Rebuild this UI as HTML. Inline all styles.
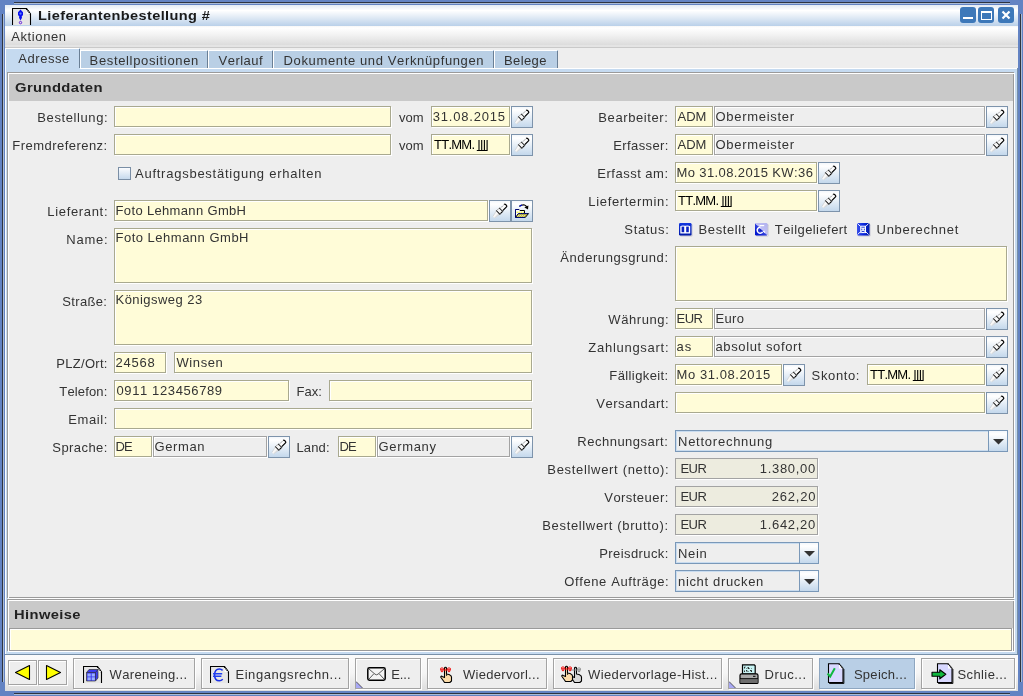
<!DOCTYPE html><html><head><meta charset="utf-8"><style>
html,body{margin:0;padding:0;}
body{width:1023px;height:696px;position:relative;overflow:hidden;background:#eeeeee;}
div,span,svg{position:absolute;}
.t{font-family:"Liberation Sans",sans-serif;font-size:13px;line-height:15px;white-space:nowrap;font-kerning:none;}
.btn{box-sizing:border-box;border:1px solid #7d93ab;background:linear-gradient(#f3f7fb 0%,#ffffff 15%,#c4d8ec 100%);}
.btn svg{left:-1px;top:-1px;}
.combo{box-sizing:border-box;border:1px solid #7a98b8;background:#eeeeee;box-shadow:inset 1px 1px 0 #c9dcef,inset -1px -1px 0 #c9dcef;}
.cbtn{box-sizing:border-box;border:1px solid #7a98b8;background:linear-gradient(#f3f7fb 0%,#ffffff 15%,#c4d8ec 100%);}
</style></head><body><div style="left:0;top:0;width:1023px;height:696px;background:#6383c3"></div>
<div style="left:2px;top:14px;width:1px;height:668px;background:#2e3440"></div>
<div style="left:3px;top:14px;width:1px;height:668px;background:#a9bbd6"></div>
<div style="left:14px;top:2px;width:996px;height:1px;background:#2e3440"></div>
<div style="left:14px;top:3px;width:996px;height:1px;background:#a9bbd6"></div>
<div style="left:1020px;top:14px;width:1px;height:668px;background:#2e3440"></div>
<div style="left:1021px;top:14px;width:1px;height:668px;background:#a9bbd6"></div>
<div style="left:14px;top:693px;width:996px;height:1px;background:#2e3440"></div>
<div style="left:14px;top:694px;width:996px;height:1px;background:#a9bbd6"></div>
<div style="left:5px;top:5px;width:1013px;height:21px;background:linear-gradient(#e4ebf4 0px,#ffffff 5.5px,#bcd2ea 20.5px)"></div>
<div style="left:5px;top:26px;width:1013px;height:22px;background:linear-gradient(#f6f6f6 0px,#ffffff 2px,#f4f4f4 8px,#dcdcdc 19px,#e4e4e4 19px,#e4e4e4 21px,#c9c9c9 21px)"></div>
<div style="left:5px;top:48px;width:1013px;height:643px;background:#eeeeee"></div>
<svg style="position:absolute;left:12px;top:8px" width="20" height="18" viewBox="0 0 20 18"><path d="M1,17 L1,1 L14.5,1 L18.5,6 L18.5,17 Z" fill="#e6e6e6"/><path d="M0.5,17 L0.5,0.5 L14.5,0.5 L18.5,6 L18.5,17" fill="none" stroke="#000" stroke-width="1.1"/><path d="M14.5,1 L14.5,6 L18.5,6" fill="#fff"/><path d="M14.3,0.8 L18.5,6.2" stroke="#000" stroke-width="1.3" stroke-dasharray="1.2,0.8"/><path d="M8.5,1.6 L11,4.3 L11,7 L9.7,8.4 L10,9.8 L8.5,12.4 L7,9.8 L7.3,8.4 L6,7 L6,4.3 Z" fill="#0a10f0"/><circle cx="8.5" cy="5.6" r="1.1" fill="#6080ff"/><circle cx="8.5" cy="14.6" r="1.2" fill="none" stroke="#5a10d8" stroke-width="0.9"/></svg>

<div style="left:960px;top:7px;width:16px;height:16px;background:#3d78b9;border-radius:3px"></div>
<div style="left:978px;top:7px;width:16px;height:16px;background:#3d78b9;border-radius:3px"></div>
<div style="left:998px;top:7px;width:16px;height:16px;background:#3d78b9;border-radius:3px"></div>
<div style="left:963px;top:17px;width:10px;height:2px;background:#fff"></div>
<div style="left:981px;top:11px;width:11px;height:9px;box-sizing:border-box;border:1.5px solid #fff;border-top-width:2px"></div>
<svg style="position:absolute;left:1001px;top:10px" width="10" height="10"><path d="M1.5,1.5 L8.5,8.5 M8.5,1.5 L1.5,8.5" stroke="#fff" stroke-width="2.2"/></svg>

<div style="left:5px;top:68px;width:1013px;height:587px;background:#c5daf0"></div>
<div style="left:5px;top:68px;width:1012px;height:1px;background:#fff"></div>
<div style="left:5px;top:68px;width:1px;height:587px;background:#fff"></div>
<div style="left:1017px;top:68px;width:1px;height:587px;background:#7890a8"></div>
<div style="left:5px;top:654px;width:1013px;height:1px;background:#7890a8"></div>
<div style="left:5px;top:48px;width:75px;height:21px;background:#c5daf0"></div>
<div style="left:5px;top:48px;width:74px;height:1px;background:#fff"></div>
<div style="left:5px;top:48px;width:1px;height:21px;background:#fff"></div>
<div style="left:79px;top:49px;width:1px;height:19px;background:#6a7f95"></div>
<div style="left:80px;top:50px;width:128px;height:18px;background:#b9cfe5"></div>
<div style="left:80px;top:50px;width:127px;height:1px;background:#fff"></div>
<div style="left:80px;top:50px;width:1px;height:18px;background:#fff"></div>
<div style="left:207px;top:51px;width:1px;height:17px;background:#6a7f95"></div>
<div style="left:208px;top:50px;width:65px;height:18px;background:#b9cfe5"></div>
<div style="left:208px;top:50px;width:64px;height:1px;background:#fff"></div>
<div style="left:208px;top:50px;width:1px;height:18px;background:#fff"></div>
<div style="left:272px;top:51px;width:1px;height:17px;background:#6a7f95"></div>
<div style="left:273px;top:50px;width:221px;height:18px;background:#b9cfe5"></div>
<div style="left:273px;top:50px;width:220px;height:1px;background:#fff"></div>
<div style="left:273px;top:50px;width:1px;height:18px;background:#fff"></div>
<div style="left:493px;top:51px;width:1px;height:17px;background:#6a7f95"></div>
<div style="left:494px;top:50px;width:64px;height:18px;background:#b9cfe5"></div>
<div style="left:494px;top:50px;width:63px;height:1px;background:#fff"></div>
<div style="left:494px;top:50px;width:1px;height:18px;background:#fff"></div>
<div style="left:557px;top:51px;width:1px;height:17px;background:#6a7f95"></div>
<div style="left:80px;top:68px;width:937px;height:1px;background:#fff"></div>





<div style="left:7px;top:72px;width:1007px;height:526px;background:#eeeeee;box-sizing:border-box;border:1px solid #9a9a9a"></div>
<div style="left:8px;top:73px;width:1007px;height:526px;box-sizing:border-box;border:1px solid #fff;background:transparent"></div>
<div style="left:9px;top:74px;width:1004px;height:27px;background:#c9c9c9"></div>

<div style="left:7px;top:599px;width:1007px;height:52px;background:#eeeeee;box-sizing:border-box;border:1px solid #9a9a9a"></div>
<div style="left:8px;top:600px;width:1007px;height:52px;box-sizing:border-box;border:1px solid #fff;background:transparent"></div>
<div style="left:9px;top:601px;width:1004px;height:27px;background:#c9c9c9"></div>

<div style="left:9px;top:628px;width:1003px;height:23px;background:#fffcd8;box-sizing:border-box;border:1px solid #9a9a9a;box-shadow:inset 1px 1px 0 #fff"></div>
<div style="left:1012px;top:629px;width:1px;height:22px;background:#fff"></div>

<div style="left:115px;top:127px;width:277px;height:1px;background:#fff"></div>
<div style="left:391px;top:107px;width:1px;height:21px;background:#fff"></div>
<div style="left:114px;top:106px;width:277px;height:21px;background:#fffcd8;box-sizing:border-box;border:1px solid #a9a98f;box-shadow:inset 1px 1px 0 #fff;"></div>

<div style="left:432px;top:127px;width:79px;height:1px;background:#fff"></div>
<div style="left:510px;top:107px;width:1px;height:21px;background:#fff"></div>
<div style="left:431px;top:106px;width:79px;height:21px;background:#fffcd8;box-sizing:border-box;border:1px solid #a9a98f;box-shadow:inset 1px 1px 0 #fff;"></div>

<div class="btn" style="left:511px;top:106px;width:22px;height:22px"><svg width="22" height="22" viewBox="0 0 22 22">
<g transform="translate(10.8,10.9) rotate(-45)">
<defs><linearGradient id="ptg" x1="0" y1="0" x2="0" y2="1"><stop offset="0" stop-color="#ffffff"/><stop offset="0.55" stop-color="#f6f6f6"/><stop offset="1" stop-color="#c4c4c4"/></linearGradient></defs>
<path d="M-8.8,-0.9 L-2.6,-2.4 L-2.6,2.5 L-8.8,1.5 Z" fill="url(#ptg)"/>
<path d="M-8.8,-0.9 L-2.6,-2.4" stroke="#c8c8c8" stroke-width="0.6"/>
<rect x="-2.8" y="-2.9" width="1.2" height="5.8" fill="#2a2a2a"/>
<rect x="-1.6" y="-2.8" width="2.9" height="5.6" fill="#f8f8f8"/>
<path d="M-1.6,2.4 L1.3,2.4" stroke="#000" stroke-width="1.1"/>
<path d="M-1.6,-2.4 L1.3,-2.4" stroke="#8a8a8a" stroke-width="0.8"/>
<rect x="1.3" y="-2.6" width="1" height="5.4" fill="#1a1a1a"/>
<rect x="2.3" y="-1.5" width="6" height="3.3" fill="#fcfcfc"/>
<path d="M2.3,1.85 L7.6,1.85 Q8.6,1.85 8.6,0.85 L8.6,-0.5 Q8.6,-1.5 7.6,-1.5" stroke="#000" stroke-width="1.2" fill="none"/>
<path d="M2.3,-1.5 L7.4,-1.5" stroke="#666" stroke-width="0.8" stroke-dasharray="0.9,0.8"/>
</g></svg></div>

<div style="left:115px;top:155px;width:277px;height:1px;background:#fff"></div>
<div style="left:391px;top:135px;width:1px;height:21px;background:#fff"></div>
<div style="left:114px;top:134px;width:277px;height:21px;background:#fffcd8;box-sizing:border-box;border:1px solid #a9a98f;box-shadow:inset 1px 1px 0 #fff;"></div>

<div style="left:432px;top:155px;width:79px;height:1px;background:#fff"></div>
<div style="left:510px;top:135px;width:1px;height:21px;background:#fff"></div>
<div style="left:431px;top:134px;width:79px;height:21px;background:#fffcd8;box-sizing:border-box;border:1px solid #a9a98f;box-shadow:inset 1px 1px 0 #fff;"></div>

<svg style="position:absolute;left:0;top:0" width="1023" height="696"><path d="M479.0,140 L479.0,150.5 L476.8,150.5 M481.7,140 L481.7,150.5 L479.5,150.5 M484.4,140 L484.4,150.5 L482.2,150.5 M487.1,140 L487.1,150.5 L484.9,150.5 " fill="none" stroke="#000" stroke-width="1.1"/></svg>
<div class="btn" style="left:511px;top:134px;width:22px;height:22px"><svg width="22" height="22" viewBox="0 0 22 22">
<g transform="translate(10.8,10.9) rotate(-45)">
<defs><linearGradient id="ptg" x1="0" y1="0" x2="0" y2="1"><stop offset="0" stop-color="#ffffff"/><stop offset="0.55" stop-color="#f6f6f6"/><stop offset="1" stop-color="#c4c4c4"/></linearGradient></defs>
<path d="M-8.8,-0.9 L-2.6,-2.4 L-2.6,2.5 L-8.8,1.5 Z" fill="url(#ptg)"/>
<path d="M-8.8,-0.9 L-2.6,-2.4" stroke="#c8c8c8" stroke-width="0.6"/>
<rect x="-2.8" y="-2.9" width="1.2" height="5.8" fill="#2a2a2a"/>
<rect x="-1.6" y="-2.8" width="2.9" height="5.6" fill="#f8f8f8"/>
<path d="M-1.6,2.4 L1.3,2.4" stroke="#000" stroke-width="1.1"/>
<path d="M-1.6,-2.4 L1.3,-2.4" stroke="#8a8a8a" stroke-width="0.8"/>
<rect x="1.3" y="-2.6" width="1" height="5.4" fill="#1a1a1a"/>
<rect x="2.3" y="-1.5" width="6" height="3.3" fill="#fcfcfc"/>
<path d="M2.3,1.85 L7.6,1.85 Q8.6,1.85 8.6,0.85 L8.6,-0.5 Q8.6,-1.5 7.6,-1.5" stroke="#000" stroke-width="1.2" fill="none"/>
<path d="M2.3,-1.5 L7.4,-1.5" stroke="#666" stroke-width="0.8" stroke-dasharray="0.9,0.8"/>
</g></svg></div>
<div style="left:118px;top:167px;width:13px;height:13px;box-sizing:border-box;border:1px solid #7a8ea5;background:linear-gradient(#fbfcfe,#c6d9ed)"></div>


<div style="left:115px;top:221px;width:374px;height:1px;background:#fff"></div>
<div style="left:488px;top:201px;width:1px;height:21px;background:#fff"></div>
<div style="left:114px;top:200px;width:374px;height:21px;background:#fffcd8;box-sizing:border-box;border:1px solid #a9a98f;box-shadow:inset 1px 1px 0 #fff;"></div>

<div class="btn" style="left:489px;top:200px;width:22px;height:22px"><svg width="22" height="22" viewBox="0 0 22 22">
<g transform="translate(10.8,10.9) rotate(-45)">
<defs><linearGradient id="ptg" x1="0" y1="0" x2="0" y2="1"><stop offset="0" stop-color="#ffffff"/><stop offset="0.55" stop-color="#f6f6f6"/><stop offset="1" stop-color="#c4c4c4"/></linearGradient></defs>
<path d="M-8.8,-0.9 L-2.6,-2.4 L-2.6,2.5 L-8.8,1.5 Z" fill="url(#ptg)"/>
<path d="M-8.8,-0.9 L-2.6,-2.4" stroke="#c8c8c8" stroke-width="0.6"/>
<rect x="-2.8" y="-2.9" width="1.2" height="5.8" fill="#2a2a2a"/>
<rect x="-1.6" y="-2.8" width="2.9" height="5.6" fill="#f8f8f8"/>
<path d="M-1.6,2.4 L1.3,2.4" stroke="#000" stroke-width="1.1"/>
<path d="M-1.6,-2.4 L1.3,-2.4" stroke="#8a8a8a" stroke-width="0.8"/>
<rect x="1.3" y="-2.6" width="1" height="5.4" fill="#1a1a1a"/>
<rect x="2.3" y="-1.5" width="6" height="3.3" fill="#fcfcfc"/>
<path d="M2.3,1.85 L7.6,1.85 Q8.6,1.85 8.6,0.85 L8.6,-0.5 Q8.6,-1.5 7.6,-1.5" stroke="#000" stroke-width="1.2" fill="none"/>
<path d="M2.3,-1.5 L7.4,-1.5" stroke="#666" stroke-width="0.8" stroke-dasharray="0.9,0.8"/>
</g></svg></div>
<div class="btn" style="left:511px;top:200px;width:22px;height:22px"><svg width="22" height="22" viewBox="0 0 22 22">
<path d="M4.5,17.5 L4.5,9.5 L8,9.5 L9,10.5 L13.5,10.5 L13.5,14" fill="#fdfdfd" stroke="#000" stroke-width="1"/>
<path d="M4.5,17.5 L4.5,9.5 L8,9.5" fill="none" stroke="#0010e0" stroke-width="1" stroke-dasharray="1,1"/>
<rect x="5.6" y="11.6" width="1.2" height="1.2" fill="#f0f000"/><rect x="7.6" y="11.6" width="1.2" height="1.2" fill="#f0f000"/><rect x="9.6" y="11.6" width="1.2" height="1.2" fill="#f0f000"/><rect x="11.6" y="11.6" width="1.2" height="1.2" fill="#f0f000"/>
<path d="M4.5,17.5 L7.3,13.6 L17.5,13.6 L14.2,17.5 Z" fill="#bdb640" stroke="#000" stroke-width="1"/>
<path d="M7.3,13.6 L17.5,13.6 M4.5,17.5 L14.2,17.5" stroke="#0018e8" stroke-width="1" stroke-dasharray="1,1"/>
<path d="M6.5,16.5 L8,14.8 M8.5,16.5 L10,14.8 M10.5,16.5 L12,14.8 M12.5,16.5 L14,14.8" stroke="#f4f4c0" stroke-width="0.8"/>
<path d="M8.4,6.4 Q10.5,4.6 13.5,5 Q15.2,5.4 15.8,7.6" fill="none" stroke="#000" stroke-width="1.2"/>
<path d="M8.4,6.4 Q9.5,5.4 11,5.1" fill="none" stroke="#0010c0" stroke-width="1.2"/>
<path d="M13.4,7.4 L17.4,5.6 L17,9.4 Z" fill="#000"/>
</svg></div>

<div style="left:115px;top:283px;width:418px;height:1px;background:#fff"></div>
<div style="left:532px;top:229px;width:1px;height:55px;background:#fff"></div>
<div style="left:114px;top:228px;width:418px;height:55px;background:#fffcd8;box-sizing:border-box;border:1px solid #a9a98f;box-shadow:inset 1px 1px 0 #fff;"></div>


<div style="left:115px;top:345px;width:418px;height:1px;background:#fff"></div>
<div style="left:532px;top:291px;width:1px;height:55px;background:#fff"></div>
<div style="left:114px;top:290px;width:418px;height:55px;background:#fffcd8;box-sizing:border-box;border:1px solid #a9a98f;box-shadow:inset 1px 1px 0 #fff;"></div>


<div style="left:115px;top:373px;width:52px;height:1px;background:#fff"></div>
<div style="left:166px;top:353px;width:1px;height:21px;background:#fff"></div>
<div style="left:114px;top:352px;width:52px;height:21px;background:#fffcd8;box-sizing:border-box;border:1px solid #a9a98f;box-shadow:inset 1px 1px 0 #fff;"></div>

<div style="left:175px;top:373px;width:358px;height:1px;background:#fff"></div>
<div style="left:532px;top:353px;width:1px;height:21px;background:#fff"></div>
<div style="left:174px;top:352px;width:358px;height:21px;background:#fffcd8;box-sizing:border-box;border:1px solid #a9a98f;box-shadow:inset 1px 1px 0 #fff;"></div>


<div style="left:115px;top:401px;width:175px;height:1px;background:#fff"></div>
<div style="left:289px;top:381px;width:1px;height:21px;background:#fff"></div>
<div style="left:114px;top:380px;width:175px;height:21px;background:#fffcd8;box-sizing:border-box;border:1px solid #a9a98f;box-shadow:inset 1px 1px 0 #fff;"></div>


<div style="left:330px;top:401px;width:203px;height:1px;background:#fff"></div>
<div style="left:532px;top:381px;width:1px;height:21px;background:#fff"></div>
<div style="left:329px;top:380px;width:203px;height:21px;background:#fffcd8;box-sizing:border-box;border:1px solid #a9a98f;box-shadow:inset 1px 1px 0 #fff;"></div>

<div style="left:115px;top:429px;width:418px;height:1px;background:#fff"></div>
<div style="left:532px;top:409px;width:1px;height:21px;background:#fff"></div>
<div style="left:114px;top:408px;width:418px;height:21px;background:#fffcd8;box-sizing:border-box;border:1px solid #a9a98f;box-shadow:inset 1px 1px 0 #fff;"></div>

<div style="left:115px;top:457px;width:38px;height:1px;background:#fff"></div>
<div style="left:152px;top:437px;width:1px;height:21px;background:#fff"></div>
<div style="left:114px;top:436px;width:38px;height:21px;background:#fffcd8;box-sizing:border-box;border:1px solid #a9a98f;box-shadow:inset 1px 1px 0 #fff;"></div>

<div style="left:154px;top:457px;width:114px;height:1px;background:#fff"></div>
<div style="left:267px;top:437px;width:1px;height:21px;background:#fff"></div>
<div style="left:153px;top:436px;width:114px;height:21px;background:#eeeeee;box-sizing:border-box;border:1px solid #a3a3a3;box-shadow:inset 1px 1px 0 #fff;"></div>

<div class="btn" style="left:268px;top:436px;width:22px;height:22px"><svg width="22" height="22" viewBox="0 0 22 22">
<g transform="translate(10.8,10.9) rotate(-45)">
<defs><linearGradient id="ptg" x1="0" y1="0" x2="0" y2="1"><stop offset="0" stop-color="#ffffff"/><stop offset="0.55" stop-color="#f6f6f6"/><stop offset="1" stop-color="#c4c4c4"/></linearGradient></defs>
<path d="M-8.8,-0.9 L-2.6,-2.4 L-2.6,2.5 L-8.8,1.5 Z" fill="url(#ptg)"/>
<path d="M-8.8,-0.9 L-2.6,-2.4" stroke="#c8c8c8" stroke-width="0.6"/>
<rect x="-2.8" y="-2.9" width="1.2" height="5.8" fill="#2a2a2a"/>
<rect x="-1.6" y="-2.8" width="2.9" height="5.6" fill="#f8f8f8"/>
<path d="M-1.6,2.4 L1.3,2.4" stroke="#000" stroke-width="1.1"/>
<path d="M-1.6,-2.4 L1.3,-2.4" stroke="#8a8a8a" stroke-width="0.8"/>
<rect x="1.3" y="-2.6" width="1" height="5.4" fill="#1a1a1a"/>
<rect x="2.3" y="-1.5" width="6" height="3.3" fill="#fcfcfc"/>
<path d="M2.3,1.85 L7.6,1.85 Q8.6,1.85 8.6,0.85 L8.6,-0.5 Q8.6,-1.5 7.6,-1.5" stroke="#000" stroke-width="1.2" fill="none"/>
<path d="M2.3,-1.5 L7.4,-1.5" stroke="#666" stroke-width="0.8" stroke-dasharray="0.9,0.8"/>
</g></svg></div>

<div style="left:339px;top:457px;width:38px;height:1px;background:#fff"></div>
<div style="left:376px;top:437px;width:1px;height:21px;background:#fff"></div>
<div style="left:338px;top:436px;width:38px;height:21px;background:#fffcd8;box-sizing:border-box;border:1px solid #a9a98f;box-shadow:inset 1px 1px 0 #fff;"></div>

<div style="left:378px;top:457px;width:133px;height:1px;background:#fff"></div>
<div style="left:510px;top:437px;width:1px;height:21px;background:#fff"></div>
<div style="left:377px;top:436px;width:133px;height:21px;background:#eeeeee;box-sizing:border-box;border:1px solid #a3a3a3;box-shadow:inset 1px 1px 0 #fff;"></div>

<div class="btn" style="left:511px;top:436px;width:22px;height:22px"><svg width="22" height="22" viewBox="0 0 22 22">
<g transform="translate(10.8,10.9) rotate(-45)">
<defs><linearGradient id="ptg" x1="0" y1="0" x2="0" y2="1"><stop offset="0" stop-color="#ffffff"/><stop offset="0.55" stop-color="#f6f6f6"/><stop offset="1" stop-color="#c4c4c4"/></linearGradient></defs>
<path d="M-8.8,-0.9 L-2.6,-2.4 L-2.6,2.5 L-8.8,1.5 Z" fill="url(#ptg)"/>
<path d="M-8.8,-0.9 L-2.6,-2.4" stroke="#c8c8c8" stroke-width="0.6"/>
<rect x="-2.8" y="-2.9" width="1.2" height="5.8" fill="#2a2a2a"/>
<rect x="-1.6" y="-2.8" width="2.9" height="5.6" fill="#f8f8f8"/>
<path d="M-1.6,2.4 L1.3,2.4" stroke="#000" stroke-width="1.1"/>
<path d="M-1.6,-2.4 L1.3,-2.4" stroke="#8a8a8a" stroke-width="0.8"/>
<rect x="1.3" y="-2.6" width="1" height="5.4" fill="#1a1a1a"/>
<rect x="2.3" y="-1.5" width="6" height="3.3" fill="#fcfcfc"/>
<path d="M2.3,1.85 L7.6,1.85 Q8.6,1.85 8.6,0.85 L8.6,-0.5 Q8.6,-1.5 7.6,-1.5" stroke="#000" stroke-width="1.2" fill="none"/>
<path d="M2.3,-1.5 L7.4,-1.5" stroke="#666" stroke-width="0.8" stroke-dasharray="0.9,0.8"/>
</g></svg></div>

<div style="left:676px;top:127px;width:38px;height:1px;background:#fff"></div>
<div style="left:713px;top:107px;width:1px;height:21px;background:#fff"></div>
<div style="left:675px;top:106px;width:38px;height:21px;background:#fffcd8;box-sizing:border-box;border:1px solid #a9a98f;box-shadow:inset 1px 1px 0 #fff;"></div>

<div style="left:715px;top:127px;width:271px;height:1px;background:#fff"></div>
<div style="left:985px;top:107px;width:1px;height:21px;background:#fff"></div>
<div style="left:714px;top:106px;width:271px;height:21px;background:#eeeeee;box-sizing:border-box;border:1px solid #a3a3a3;box-shadow:inset 1px 1px 0 #fff;"></div>

<div class="btn" style="left:986px;top:106px;width:22px;height:22px"><svg width="22" height="22" viewBox="0 0 22 22">
<g transform="translate(10.8,10.9) rotate(-45)">
<defs><linearGradient id="ptg" x1="0" y1="0" x2="0" y2="1"><stop offset="0" stop-color="#ffffff"/><stop offset="0.55" stop-color="#f6f6f6"/><stop offset="1" stop-color="#c4c4c4"/></linearGradient></defs>
<path d="M-8.8,-0.9 L-2.6,-2.4 L-2.6,2.5 L-8.8,1.5 Z" fill="url(#ptg)"/>
<path d="M-8.8,-0.9 L-2.6,-2.4" stroke="#c8c8c8" stroke-width="0.6"/>
<rect x="-2.8" y="-2.9" width="1.2" height="5.8" fill="#2a2a2a"/>
<rect x="-1.6" y="-2.8" width="2.9" height="5.6" fill="#f8f8f8"/>
<path d="M-1.6,2.4 L1.3,2.4" stroke="#000" stroke-width="1.1"/>
<path d="M-1.6,-2.4 L1.3,-2.4" stroke="#8a8a8a" stroke-width="0.8"/>
<rect x="1.3" y="-2.6" width="1" height="5.4" fill="#1a1a1a"/>
<rect x="2.3" y="-1.5" width="6" height="3.3" fill="#fcfcfc"/>
<path d="M2.3,1.85 L7.6,1.85 Q8.6,1.85 8.6,0.85 L8.6,-0.5 Q8.6,-1.5 7.6,-1.5" stroke="#000" stroke-width="1.2" fill="none"/>
<path d="M2.3,-1.5 L7.4,-1.5" stroke="#666" stroke-width="0.8" stroke-dasharray="0.9,0.8"/>
</g></svg></div>

<div style="left:676px;top:155px;width:38px;height:1px;background:#fff"></div>
<div style="left:713px;top:135px;width:1px;height:21px;background:#fff"></div>
<div style="left:675px;top:134px;width:38px;height:21px;background:#fffcd8;box-sizing:border-box;border:1px solid #a9a98f;box-shadow:inset 1px 1px 0 #fff;"></div>

<div style="left:715px;top:155px;width:271px;height:1px;background:#fff"></div>
<div style="left:985px;top:135px;width:1px;height:21px;background:#fff"></div>
<div style="left:714px;top:134px;width:271px;height:21px;background:#eeeeee;box-sizing:border-box;border:1px solid #a3a3a3;box-shadow:inset 1px 1px 0 #fff;"></div>

<div class="btn" style="left:986px;top:134px;width:22px;height:22px"><svg width="22" height="22" viewBox="0 0 22 22">
<g transform="translate(10.8,10.9) rotate(-45)">
<defs><linearGradient id="ptg" x1="0" y1="0" x2="0" y2="1"><stop offset="0" stop-color="#ffffff"/><stop offset="0.55" stop-color="#f6f6f6"/><stop offset="1" stop-color="#c4c4c4"/></linearGradient></defs>
<path d="M-8.8,-0.9 L-2.6,-2.4 L-2.6,2.5 L-8.8,1.5 Z" fill="url(#ptg)"/>
<path d="M-8.8,-0.9 L-2.6,-2.4" stroke="#c8c8c8" stroke-width="0.6"/>
<rect x="-2.8" y="-2.9" width="1.2" height="5.8" fill="#2a2a2a"/>
<rect x="-1.6" y="-2.8" width="2.9" height="5.6" fill="#f8f8f8"/>
<path d="M-1.6,2.4 L1.3,2.4" stroke="#000" stroke-width="1.1"/>
<path d="M-1.6,-2.4 L1.3,-2.4" stroke="#8a8a8a" stroke-width="0.8"/>
<rect x="1.3" y="-2.6" width="1" height="5.4" fill="#1a1a1a"/>
<rect x="2.3" y="-1.5" width="6" height="3.3" fill="#fcfcfc"/>
<path d="M2.3,1.85 L7.6,1.85 Q8.6,1.85 8.6,0.85 L8.6,-0.5 Q8.6,-1.5 7.6,-1.5" stroke="#000" stroke-width="1.2" fill="none"/>
<path d="M2.3,-1.5 L7.4,-1.5" stroke="#666" stroke-width="0.8" stroke-dasharray="0.9,0.8"/>
</g></svg></div>

<div style="left:676px;top:183px;width:142px;height:1px;background:#fff"></div>
<div style="left:817px;top:163px;width:1px;height:21px;background:#fff"></div>
<div style="left:675px;top:162px;width:142px;height:21px;background:#fffcd8;box-sizing:border-box;border:1px solid #a9a98f;box-shadow:inset 1px 1px 0 #fff;"></div>

<div class="btn" style="left:818px;top:162px;width:22px;height:22px"><svg width="22" height="22" viewBox="0 0 22 22">
<g transform="translate(10.8,10.9) rotate(-45)">
<defs><linearGradient id="ptg" x1="0" y1="0" x2="0" y2="1"><stop offset="0" stop-color="#ffffff"/><stop offset="0.55" stop-color="#f6f6f6"/><stop offset="1" stop-color="#c4c4c4"/></linearGradient></defs>
<path d="M-8.8,-0.9 L-2.6,-2.4 L-2.6,2.5 L-8.8,1.5 Z" fill="url(#ptg)"/>
<path d="M-8.8,-0.9 L-2.6,-2.4" stroke="#c8c8c8" stroke-width="0.6"/>
<rect x="-2.8" y="-2.9" width="1.2" height="5.8" fill="#2a2a2a"/>
<rect x="-1.6" y="-2.8" width="2.9" height="5.6" fill="#f8f8f8"/>
<path d="M-1.6,2.4 L1.3,2.4" stroke="#000" stroke-width="1.1"/>
<path d="M-1.6,-2.4 L1.3,-2.4" stroke="#8a8a8a" stroke-width="0.8"/>
<rect x="1.3" y="-2.6" width="1" height="5.4" fill="#1a1a1a"/>
<rect x="2.3" y="-1.5" width="6" height="3.3" fill="#fcfcfc"/>
<path d="M2.3,1.85 L7.6,1.85 Q8.6,1.85 8.6,0.85 L8.6,-0.5 Q8.6,-1.5 7.6,-1.5" stroke="#000" stroke-width="1.2" fill="none"/>
<path d="M2.3,-1.5 L7.4,-1.5" stroke="#666" stroke-width="0.8" stroke-dasharray="0.9,0.8"/>
</g></svg></div>

<div style="left:676px;top:211px;width:142px;height:1px;background:#fff"></div>
<div style="left:817px;top:191px;width:1px;height:21px;background:#fff"></div>
<div style="left:675px;top:190px;width:142px;height:21px;background:#fffcd8;box-sizing:border-box;border:1px solid #a9a98f;box-shadow:inset 1px 1px 0 #fff;"></div>

<svg style="position:absolute;left:0;top:0" width="1023" height="696"><path d="M723.0,196 L723.0,206.5 L720.8,206.5 M725.7,196 L725.7,206.5 L723.5,206.5 M728.4,196 L728.4,206.5 L726.2,206.5 M731.1,196 L731.1,206.5 L728.9,206.5 " fill="none" stroke="#000" stroke-width="1.1"/></svg>
<div class="btn" style="left:818px;top:190px;width:22px;height:22px"><svg width="22" height="22" viewBox="0 0 22 22">
<g transform="translate(10.8,10.9) rotate(-45)">
<defs><linearGradient id="ptg" x1="0" y1="0" x2="0" y2="1"><stop offset="0" stop-color="#ffffff"/><stop offset="0.55" stop-color="#f6f6f6"/><stop offset="1" stop-color="#c4c4c4"/></linearGradient></defs>
<path d="M-8.8,-0.9 L-2.6,-2.4 L-2.6,2.5 L-8.8,1.5 Z" fill="url(#ptg)"/>
<path d="M-8.8,-0.9 L-2.6,-2.4" stroke="#c8c8c8" stroke-width="0.6"/>
<rect x="-2.8" y="-2.9" width="1.2" height="5.8" fill="#2a2a2a"/>
<rect x="-1.6" y="-2.8" width="2.9" height="5.6" fill="#f8f8f8"/>
<path d="M-1.6,2.4 L1.3,2.4" stroke="#000" stroke-width="1.1"/>
<path d="M-1.6,-2.4 L1.3,-2.4" stroke="#8a8a8a" stroke-width="0.8"/>
<rect x="1.3" y="-2.6" width="1" height="5.4" fill="#1a1a1a"/>
<rect x="2.3" y="-1.5" width="6" height="3.3" fill="#fcfcfc"/>
<path d="M2.3,1.85 L7.6,1.85 Q8.6,1.85 8.6,0.85 L8.6,-0.5 Q8.6,-1.5 7.6,-1.5" stroke="#000" stroke-width="1.2" fill="none"/>
<path d="M2.3,-1.5 L7.4,-1.5" stroke="#666" stroke-width="0.8" stroke-dasharray="0.9,0.8"/>
</g></svg></div>

<svg style="position:absolute;left:678px;top:222px" width="16" height="16" viewBox="0 0 16 16">
<defs><linearGradient id="g1" x1="0" y1="0" x2="0" y2="1"><stop offset="0" stop-color="#1236e0"/><stop offset="1" stop-color="#001aa8"/></linearGradient></defs>
<rect x="2" y="2" width="12.5" height="12.5" rx="1.2" fill="#9090b0" opacity="0.45"/>
<rect x="1" y="1" width="12.5" height="12.5" rx="1.2" fill="url(#g1)"/>
<path d="M2.3,4.2 Q4,3 7.2,3.8 Q10.4,3 12.2,4.2 L12.2,11.5 L2.3,11.5 Z" fill="#fff"/>
<rect x="3.6" y="4.6" width="2.6" height="5.6" fill="#0a22c0"/><rect x="8.2" y="4.6" width="2.6" height="5.6" fill="#0a22c0"/>
</svg>

<svg style="position:absolute;left:754px;top:222px" width="16" height="16" viewBox="0 0 16 16">
<defs><linearGradient id="g2" x1="0" y1="1" x2="1" y2="0"><stop offset="0.2" stop-color="#0518d0"/><stop offset="0.5" stop-color="#3a48e0"/><stop offset="0.52" stop-color="#c0c0f4"/><stop offset="1" stop-color="#b0b0ee"/></linearGradient></defs>
<rect x="2" y="2" width="12.5" height="12.5" rx="1.2" fill="#9090b0" opacity="0.45"/>
<rect x="1" y="1" width="12.5" height="12.5" rx="1.2" fill="url(#g2)"/>
<path d="M0.8,0.8 L13.6,13.6" stroke="#fff" stroke-width="0.9" stroke-dasharray="1,0.9"/>
<path d="M5.5,3.6 L10.2,3.6" stroke="#fff" stroke-width="1.2"/>
<path d="M8.6,10 A3,3 0 1 1 6.4,5.2" fill="none" stroke="#fff" stroke-width="1.5"/>
<path d="M5.9,6.9 A1.6,1.6 0 0 0 8,9" fill="#0818b0"/>
<path d="M8.6,9.2 L10.6,8.8 L11,11.2 Z" fill="#fff"/>
</svg>

<svg style="position:absolute;left:856px;top:222px" width="16" height="16" viewBox="0 0 16 16">
<defs><linearGradient id="g3" x1="0" y1="0" x2="1" y2="0"><stop offset="0" stop-color="#3a50e8"/><stop offset="0.5" stop-color="#0a28e0"/><stop offset="1" stop-color="#001aa8"/></linearGradient></defs>
<rect x="2" y="2" width="12.5" height="12.5" rx="1.2" fill="#9090b0" opacity="0.45"/>
<rect x="1" y="1" width="12.5" height="12.5" rx="1.2" fill="url(#g3)"/>
<path d="M1.5,1.5 L4.2,4.2 M12.5,1.5 L10,4.2 M1.5,12.5 L4.2,10 M12.5,12.5 L10,10" stroke="#fff" stroke-width="0.9"/>
<rect x="4.2" y="3.7" width="5.8" height="7.4" fill="#fff"/>
<path d="M5.3,5.2 L8.8,5.2 M5.8,6.6 L5.8,8.4 M8.3,6.6 L8.3,8.4 M5.5,9.8 Q7,8.8 8.6,9.8" stroke="#0a28d0" stroke-width="0.9" fill="none"/>
</svg>


<div style="left:676px;top:301px;width:332px;height:1px;background:#fff"></div>
<div style="left:1007px;top:247px;width:1px;height:55px;background:#fff"></div>
<div style="left:675px;top:246px;width:332px;height:55px;background:#fffcd8;box-sizing:border-box;border:1px solid #a9a98f;box-shadow:inset 1px 1px 0 #fff;"></div>

<div style="left:676px;top:329px;width:38px;height:1px;background:#fff"></div>
<div style="left:713px;top:309px;width:1px;height:21px;background:#fff"></div>
<div style="left:675px;top:308px;width:38px;height:21px;background:#fffcd8;box-sizing:border-box;border:1px solid #a9a98f;box-shadow:inset 1px 1px 0 #fff;"></div>

<div style="left:715px;top:329px;width:271px;height:1px;background:#fff"></div>
<div style="left:985px;top:309px;width:1px;height:21px;background:#fff"></div>
<div style="left:714px;top:308px;width:271px;height:21px;background:#eeeeee;box-sizing:border-box;border:1px solid #a3a3a3;box-shadow:inset 1px 1px 0 #fff;"></div>

<div class="btn" style="left:986px;top:308px;width:22px;height:22px"><svg width="22" height="22" viewBox="0 0 22 22">
<g transform="translate(10.8,10.9) rotate(-45)">
<defs><linearGradient id="ptg" x1="0" y1="0" x2="0" y2="1"><stop offset="0" stop-color="#ffffff"/><stop offset="0.55" stop-color="#f6f6f6"/><stop offset="1" stop-color="#c4c4c4"/></linearGradient></defs>
<path d="M-8.8,-0.9 L-2.6,-2.4 L-2.6,2.5 L-8.8,1.5 Z" fill="url(#ptg)"/>
<path d="M-8.8,-0.9 L-2.6,-2.4" stroke="#c8c8c8" stroke-width="0.6"/>
<rect x="-2.8" y="-2.9" width="1.2" height="5.8" fill="#2a2a2a"/>
<rect x="-1.6" y="-2.8" width="2.9" height="5.6" fill="#f8f8f8"/>
<path d="M-1.6,2.4 L1.3,2.4" stroke="#000" stroke-width="1.1"/>
<path d="M-1.6,-2.4 L1.3,-2.4" stroke="#8a8a8a" stroke-width="0.8"/>
<rect x="1.3" y="-2.6" width="1" height="5.4" fill="#1a1a1a"/>
<rect x="2.3" y="-1.5" width="6" height="3.3" fill="#fcfcfc"/>
<path d="M2.3,1.85 L7.6,1.85 Q8.6,1.85 8.6,0.85 L8.6,-0.5 Q8.6,-1.5 7.6,-1.5" stroke="#000" stroke-width="1.2" fill="none"/>
<path d="M2.3,-1.5 L7.4,-1.5" stroke="#666" stroke-width="0.8" stroke-dasharray="0.9,0.8"/>
</g></svg></div>

<div style="left:676px;top:357px;width:38px;height:1px;background:#fff"></div>
<div style="left:713px;top:337px;width:1px;height:21px;background:#fff"></div>
<div style="left:675px;top:336px;width:38px;height:21px;background:#fffcd8;box-sizing:border-box;border:1px solid #a9a98f;box-shadow:inset 1px 1px 0 #fff;"></div>

<div style="left:715px;top:357px;width:271px;height:1px;background:#fff"></div>
<div style="left:985px;top:337px;width:1px;height:21px;background:#fff"></div>
<div style="left:714px;top:336px;width:271px;height:21px;background:#eeeeee;box-sizing:border-box;border:1px solid #a3a3a3;box-shadow:inset 1px 1px 0 #fff;"></div>

<div class="btn" style="left:986px;top:336px;width:22px;height:22px"><svg width="22" height="22" viewBox="0 0 22 22">
<g transform="translate(10.8,10.9) rotate(-45)">
<defs><linearGradient id="ptg" x1="0" y1="0" x2="0" y2="1"><stop offset="0" stop-color="#ffffff"/><stop offset="0.55" stop-color="#f6f6f6"/><stop offset="1" stop-color="#c4c4c4"/></linearGradient></defs>
<path d="M-8.8,-0.9 L-2.6,-2.4 L-2.6,2.5 L-8.8,1.5 Z" fill="url(#ptg)"/>
<path d="M-8.8,-0.9 L-2.6,-2.4" stroke="#c8c8c8" stroke-width="0.6"/>
<rect x="-2.8" y="-2.9" width="1.2" height="5.8" fill="#2a2a2a"/>
<rect x="-1.6" y="-2.8" width="2.9" height="5.6" fill="#f8f8f8"/>
<path d="M-1.6,2.4 L1.3,2.4" stroke="#000" stroke-width="1.1"/>
<path d="M-1.6,-2.4 L1.3,-2.4" stroke="#8a8a8a" stroke-width="0.8"/>
<rect x="1.3" y="-2.6" width="1" height="5.4" fill="#1a1a1a"/>
<rect x="2.3" y="-1.5" width="6" height="3.3" fill="#fcfcfc"/>
<path d="M2.3,1.85 L7.6,1.85 Q8.6,1.85 8.6,0.85 L8.6,-0.5 Q8.6,-1.5 7.6,-1.5" stroke="#000" stroke-width="1.2" fill="none"/>
<path d="M2.3,-1.5 L7.4,-1.5" stroke="#666" stroke-width="0.8" stroke-dasharray="0.9,0.8"/>
</g></svg></div>

<div style="left:676px;top:385px;width:107px;height:1px;background:#fff"></div>
<div style="left:782px;top:365px;width:1px;height:21px;background:#fff"></div>
<div style="left:675px;top:364px;width:107px;height:21px;background:#fffcd8;box-sizing:border-box;border:1px solid #a9a98f;box-shadow:inset 1px 1px 0 #fff;"></div>

<div class="btn" style="left:783px;top:364px;width:22px;height:22px"><svg width="22" height="22" viewBox="0 0 22 22">
<g transform="translate(10.8,10.9) rotate(-45)">
<defs><linearGradient id="ptg" x1="0" y1="0" x2="0" y2="1"><stop offset="0" stop-color="#ffffff"/><stop offset="0.55" stop-color="#f6f6f6"/><stop offset="1" stop-color="#c4c4c4"/></linearGradient></defs>
<path d="M-8.8,-0.9 L-2.6,-2.4 L-2.6,2.5 L-8.8,1.5 Z" fill="url(#ptg)"/>
<path d="M-8.8,-0.9 L-2.6,-2.4" stroke="#c8c8c8" stroke-width="0.6"/>
<rect x="-2.8" y="-2.9" width="1.2" height="5.8" fill="#2a2a2a"/>
<rect x="-1.6" y="-2.8" width="2.9" height="5.6" fill="#f8f8f8"/>
<path d="M-1.6,2.4 L1.3,2.4" stroke="#000" stroke-width="1.1"/>
<path d="M-1.6,-2.4 L1.3,-2.4" stroke="#8a8a8a" stroke-width="0.8"/>
<rect x="1.3" y="-2.6" width="1" height="5.4" fill="#1a1a1a"/>
<rect x="2.3" y="-1.5" width="6" height="3.3" fill="#fcfcfc"/>
<path d="M2.3,1.85 L7.6,1.85 Q8.6,1.85 8.6,0.85 L8.6,-0.5 Q8.6,-1.5 7.6,-1.5" stroke="#000" stroke-width="1.2" fill="none"/>
<path d="M2.3,-1.5 L7.4,-1.5" stroke="#666" stroke-width="0.8" stroke-dasharray="0.9,0.8"/>
</g></svg></div>

<div style="left:868px;top:385px;width:118px;height:1px;background:#fff"></div>
<div style="left:985px;top:365px;width:1px;height:21px;background:#fff"></div>
<div style="left:867px;top:364px;width:118px;height:21px;background:#fffcd8;box-sizing:border-box;border:1px solid #a9a98f;box-shadow:inset 1px 1px 0 #fff;"></div>

<svg style="position:absolute;left:0;top:0" width="1023" height="696"><path d="M915.0,370 L915.0,380.5 L912.8,380.5 M917.7,370 L917.7,380.5 L915.5,380.5 M920.4,370 L920.4,380.5 L918.2,380.5 M923.1,370 L923.1,380.5 L920.9,380.5 " fill="none" stroke="#000" stroke-width="1.1"/></svg>
<div class="btn" style="left:986px;top:364px;width:22px;height:22px"><svg width="22" height="22" viewBox="0 0 22 22">
<g transform="translate(10.8,10.9) rotate(-45)">
<defs><linearGradient id="ptg" x1="0" y1="0" x2="0" y2="1"><stop offset="0" stop-color="#ffffff"/><stop offset="0.55" stop-color="#f6f6f6"/><stop offset="1" stop-color="#c4c4c4"/></linearGradient></defs>
<path d="M-8.8,-0.9 L-2.6,-2.4 L-2.6,2.5 L-8.8,1.5 Z" fill="url(#ptg)"/>
<path d="M-8.8,-0.9 L-2.6,-2.4" stroke="#c8c8c8" stroke-width="0.6"/>
<rect x="-2.8" y="-2.9" width="1.2" height="5.8" fill="#2a2a2a"/>
<rect x="-1.6" y="-2.8" width="2.9" height="5.6" fill="#f8f8f8"/>
<path d="M-1.6,2.4 L1.3,2.4" stroke="#000" stroke-width="1.1"/>
<path d="M-1.6,-2.4 L1.3,-2.4" stroke="#8a8a8a" stroke-width="0.8"/>
<rect x="1.3" y="-2.6" width="1" height="5.4" fill="#1a1a1a"/>
<rect x="2.3" y="-1.5" width="6" height="3.3" fill="#fcfcfc"/>
<path d="M2.3,1.85 L7.6,1.85 Q8.6,1.85 8.6,0.85 L8.6,-0.5 Q8.6,-1.5 7.6,-1.5" stroke="#000" stroke-width="1.2" fill="none"/>
<path d="M2.3,-1.5 L7.4,-1.5" stroke="#666" stroke-width="0.8" stroke-dasharray="0.9,0.8"/>
</g></svg></div>

<div style="left:676px;top:413px;width:310px;height:1px;background:#fff"></div>
<div style="left:985px;top:393px;width:1px;height:21px;background:#fff"></div>
<div style="left:675px;top:392px;width:310px;height:21px;background:#fffcd8;box-sizing:border-box;border:1px solid #a9a98f;box-shadow:inset 1px 1px 0 #fff;"></div>
<div class="btn" style="left:986px;top:392px;width:22px;height:22px"><svg width="22" height="22" viewBox="0 0 22 22">
<g transform="translate(10.8,10.9) rotate(-45)">
<defs><linearGradient id="ptg" x1="0" y1="0" x2="0" y2="1"><stop offset="0" stop-color="#ffffff"/><stop offset="0.55" stop-color="#f6f6f6"/><stop offset="1" stop-color="#c4c4c4"/></linearGradient></defs>
<path d="M-8.8,-0.9 L-2.6,-2.4 L-2.6,2.5 L-8.8,1.5 Z" fill="url(#ptg)"/>
<path d="M-8.8,-0.9 L-2.6,-2.4" stroke="#c8c8c8" stroke-width="0.6"/>
<rect x="-2.8" y="-2.9" width="1.2" height="5.8" fill="#2a2a2a"/>
<rect x="-1.6" y="-2.8" width="2.9" height="5.6" fill="#f8f8f8"/>
<path d="M-1.6,2.4 L1.3,2.4" stroke="#000" stroke-width="1.1"/>
<path d="M-1.6,-2.4 L1.3,-2.4" stroke="#8a8a8a" stroke-width="0.8"/>
<rect x="1.3" y="-2.6" width="1" height="5.4" fill="#1a1a1a"/>
<rect x="2.3" y="-1.5" width="6" height="3.3" fill="#fcfcfc"/>
<path d="M2.3,1.85 L7.6,1.85 Q8.6,1.85 8.6,0.85 L8.6,-0.5 Q8.6,-1.5 7.6,-1.5" stroke="#000" stroke-width="1.2" fill="none"/>
<path d="M2.3,-1.5 L7.4,-1.5" stroke="#666" stroke-width="0.8" stroke-dasharray="0.9,0.8"/>
</g></svg></div>

<div class="combo" style="left:675px;top:430px;width:333px;height:22px"></div>
<div class="cbtn" style="left:988px;top:430px;width:20px;height:22px"></div>
<svg style="position:absolute;left:992.5px;top:439px" width="11" height="6"><path d="M0,0 L11,0 L5.5,5.5 Z" fill="#333"/></svg>


<div style="left:676px;top:479px;width:143px;height:1px;background:#fff"></div>
<div style="left:818px;top:459px;width:1px;height:21px;background:#fff"></div>
<div style="left:675px;top:458px;width:143px;height:21px;background:#edecdf;box-sizing:border-box;border:1px solid #a3a3a3;"></div>



<div style="left:676px;top:507px;width:143px;height:1px;background:#fff"></div>
<div style="left:818px;top:487px;width:1px;height:21px;background:#fff"></div>
<div style="left:675px;top:486px;width:143px;height:21px;background:#edecdf;box-sizing:border-box;border:1px solid #a3a3a3;"></div>



<div style="left:676px;top:535px;width:143px;height:1px;background:#fff"></div>
<div style="left:818px;top:515px;width:1px;height:21px;background:#fff"></div>
<div style="left:675px;top:514px;width:143px;height:21px;background:#edecdf;box-sizing:border-box;border:1px solid #a3a3a3;"></div>



<div class="combo" style="left:675px;top:542px;width:144px;height:22px"></div>
<div class="cbtn" style="left:799px;top:542px;width:20px;height:22px"></div>
<svg style="position:absolute;left:803.5px;top:551px" width="11" height="6"><path d="M0,0 L11,0 L5.5,5.5 Z" fill="#333"/></svg>


<div class="combo" style="left:675px;top:570px;width:144px;height:22px"></div>
<div class="cbtn" style="left:799px;top:570px;width:20px;height:22px"></div>
<svg style="position:absolute;left:803.5px;top:579px" width="11" height="6"><path d="M0,0 L11,0 L5.5,5.5 Z" fill="#333"/></svg>

<div style="left:5px;top:655px;width:1013px;height:36px;background:linear-gradient(#fbfbfb 0px,#f5f5f5 18px,#dedede 35px)"></div>
<div style="left:9px;top:685px;width:29px;height:1px;background:#fff"></div>
<div style="left:37px;top:661px;width:1px;height:25px;background:#fff"></div>
<div style="left:8px;top:660px;width:29px;height:25px;box-sizing:border-box;background:#eeeeee;border:1px solid #a3a3a3;box-shadow:inset 1px 1px 0 #fff;"></div>
<div style="left:39px;top:685px;width:29px;height:1px;background:#fff"></div>
<div style="left:67px;top:661px;width:1px;height:25px;background:#fff"></div>
<div style="left:38px;top:660px;width:29px;height:25px;box-sizing:border-box;background:#eeeeee;border:1px solid #a3a3a3;box-shadow:inset 1px 1px 0 #fff;"></div>
<svg style="position:absolute;left:14px;top:664px" width="18" height="18"><path d="M1.5,8.5 L15.5,1.5 L15.5,15.5 Z" fill="#ffff00" stroke="#000" stroke-width="1.1" stroke-linejoin="round"/></svg>
<svg style="position:absolute;left:45px;top:664px" width="18" height="18"><path d="M1.5,1.5 L15.5,8.5 L1.5,15.5 Z" fill="#ffff00" stroke="#000" stroke-width="1.1" stroke-linejoin="round"/></svg>
<div style="left:74px;top:689px;width:122px;height:1px;background:#fff"></div>
<div style="left:195px;top:659px;width:1px;height:31px;background:#fff"></div>
<div style="left:73px;top:658px;width:122px;height:31px;box-sizing:border-box;background:#eeeeee;border:1px solid #a3a3a3;box-shadow:inset 1px 1px 0 #fff;"></div>
<svg style="position:absolute;left:83px;top:666px" width="20" height="18" viewBox="0 0 20 18"><path d="M1,17 L1,1 L14.5,1 L18.5,6 L18.5,17 Z" fill="#e6e6e6"/><path d="M0.5,17 L0.5,0.5 L14.5,0.5 L18.5,6 L18.5,17" fill="none" stroke="#000" stroke-width="1.1"/><path d="M14.5,1 L14.5,6 L18.5,6" fill="#fff"/><path d="M14.3,0.8 L18.5,6.2" stroke="#000" stroke-width="1.3" stroke-dasharray="1.2,0.8"/><path d="M3.5,6.5 L6,3.5 L15,3.5 L15,12 L12.5,15 L3.5,15 Z" fill="#3a3af0" stroke="#333" stroke-width="0.7"/><rect x="4.5" y="7.5" width="3.2" height="3" fill="#9ab0ff"/><rect x="8.7" y="7.5" width="3.2" height="3" fill="#9ab0ff"/><rect x="4.5" y="11.3" width="3.2" height="3" fill="#9ab0ff"/><rect x="8.7" y="11.3" width="3.2" height="3" fill="#9ab0ff"/><path d="M3.5,6.5 L12.5,6.5 L15,3.5 M12.5,6.5 L12.5,15" fill="none" stroke="#333" stroke-width="0.7"/></svg>

<div style="left:202px;top:689px;width:148px;height:1px;background:#fff"></div>
<div style="left:349px;top:659px;width:1px;height:31px;background:#fff"></div>
<div style="left:201px;top:658px;width:148px;height:31px;box-sizing:border-box;background:#eeeeee;border:1px solid #a3a3a3;box-shadow:inset 1px 1px 0 #fff;"></div>
<svg style="position:absolute;left:210px;top:666px" width="20" height="18" viewBox="0 0 20 18"><path d="M1,17 L1,1 L14.5,1 L18.5,6 L18.5,17 Z" fill="#e6e6e6"/><path d="M0.5,17 L0.5,0.5 L14.5,0.5 L18.5,6 L18.5,17" fill="none" stroke="#000" stroke-width="1.1"/><path d="M14.5,1 L14.5,6 L18.5,6" fill="#fff"/><path d="M14.3,0.8 L18.5,6.2" stroke="#000" stroke-width="1.3" stroke-dasharray="1.2,0.8"/><path d="M12.6,4.4 C11.6,3.4 10.6,3 9.4,3 C6.4,3 4.6,5.4 4.6,9 C4.6,12.6 6.4,14.8 9.4,14.8 C10.8,14.8 11.8,14.2 12.8,13.2" fill="none" stroke="#1a30e8" stroke-width="1.5"/><path d="M3,7.7 L12.2,7.7 M3,10.3 L11.4,10.3" stroke="#2040f0" stroke-width="1.6"/></svg>

<div style="left:356px;top:689px;width:66px;height:1px;background:#fff"></div>
<div style="left:421px;top:659px;width:1px;height:31px;background:#fff"></div>
<div style="left:355px;top:658px;width:66px;height:31px;box-sizing:border-box;background:#eeeeee;border:1px solid #a3a3a3;box-shadow:inset 1px 1px 0 #fff;"></div>
<svg style="position:absolute;left:356px;top:681px" width="8" height="8"><path d="M0,0.5 L6.5,7 L0,7 Z" fill="#a8a8f4"/><path d="M0,0.5 L6.5,7" stroke="#333" stroke-width="0.8"/></svg>
<svg style="position:absolute;left:367px;top:667px" width="20" height="15"><rect x="0.8" y="0.8" width="17.4" height="12.4" rx="1.6" fill="#f4f4f4" stroke="#000" stroke-width="1.5"/><path d="M2,2 L8,7.2 Q9.5,8.4 11,7.2 L17,2 M2,12 L6.8,6.8 M17,12 L12.2,6.8" fill="none" stroke="#333" stroke-width="0.8"/></svg>

<div style="left:428px;top:689px;width:120px;height:1px;background:#fff"></div>
<div style="left:547px;top:659px;width:1px;height:31px;background:#fff"></div>
<div style="left:427px;top:658px;width:120px;height:31px;box-sizing:border-box;background:#eeeeee;border:1px solid #a3a3a3;box-shadow:inset 1px 1px 0 #fff;"></div>
<svg style="position:absolute;left:438px;top:666px" width="16" height="18"><path d="M6.5,11.5 L6.5,2.2 C6.5,1 8.5,1 8.5,2.2 L8.5,8 L11,8.5 L12.8,9.6 L13.5,11 L13.5,15 L11.8,16.5 L6.5,16.5 L5.5,15 L2.8,11.2 C2.5,10.2 3.5,9.8 4.2,10.5 Z" fill="#fbdba8" stroke="#000" stroke-width="1.1" stroke-linejoin="round"/><path d="M8.6,8 L8.6,10" stroke="#000" stroke-width="0.8"/><path d="M2,4 L13,4" stroke="#f01010" stroke-width="1"/><ellipse cx="4" cy="3" rx="1.6" ry="1.1" fill="none" stroke="#f01010" stroke-width="1"/><ellipse cx="4" cy="5.6" rx="1.3" ry="0.6" fill="#f01010"/><ellipse cx="11" cy="3" rx="1.6" ry="1.1" fill="none" stroke="#f01010" stroke-width="1"/><ellipse cx="11" cy="5.6" rx="1.3" ry="0.6" fill="#f01010"/></svg>

<div style="left:554px;top:689px;width:169px;height:1px;background:#fff"></div>
<div style="left:722px;top:659px;width:1px;height:31px;background:#fff"></div>
<div style="left:553px;top:658px;width:169px;height:31px;box-sizing:border-box;background:#eeeeee;border:1px solid #a3a3a3;box-shadow:inset 1px 1px 0 #fff;"></div>
<svg style="position:absolute;left:559px;top:665px" width="28" height="21"><g transform="translate(9,1)"><path d="M6.5,11.5 L6.5,2.2 C6.5,1 8.5,1 8.5,2.2 L8.5,8 L11,8.5 L12.8,9.6 L13.5,11 L13.5,15 L11.8,16.5 L6.5,16.5 L5.5,15 L2.8,11.2 C2.5,10.2 3.5,9.8 4.2,10.5 Z" fill="#d8d8d8" stroke="#000" stroke-width="1.1" stroke-linejoin="round"/><path d="M2,4 L13,4" stroke="#888" stroke-width="0.9"/><ellipse cx="11" cy="3" rx="1.6" ry="1.1" fill="none" stroke="#888" stroke-width="0.9"/><ellipse cx="11" cy="5.6" rx="1.3" ry="0.6" fill="#888"/></g><path d="M6.5,11.5 L6.5,2.2 C6.5,1 8.5,1 8.5,2.2 L8.5,8 L11,8.5 L12.8,9.6 L13.5,11 L13.5,15 L11.8,16.5 L6.5,16.5 L5.5,15 L2.8,11.2 C2.5,10.2 3.5,9.8 4.2,10.5 Z" fill="#fbdba8" stroke="#000" stroke-width="1.1" stroke-linejoin="round"/><path d="M8.6,8 L8.6,10" stroke="#000" stroke-width="0.8"/><path d="M2,4 L13,4" stroke="#f01010" stroke-width="1"/><ellipse cx="4" cy="3" rx="1.6" ry="1.1" fill="none" stroke="#f01010" stroke-width="1"/><ellipse cx="4" cy="5.6" rx="1.3" ry="0.6" fill="#f01010"/><ellipse cx="11" cy="3" rx="1.6" ry="1.1" fill="none" stroke="#f01010" stroke-width="1"/><ellipse cx="11" cy="5.6" rx="1.3" ry="0.6" fill="#f01010"/></svg>

<div style="left:729px;top:689px;width:85px;height:1px;background:#fff"></div>
<div style="left:813px;top:659px;width:1px;height:31px;background:#fff"></div>
<div style="left:728px;top:658px;width:85px;height:31px;box-sizing:border-box;background:#eeeeee;border:1px solid #a3a3a3;box-shadow:inset 1px 1px 0 #fff;"></div>
<svg style="position:absolute;left:729px;top:681px" width="8" height="8"><path d="M0,0.5 L6.5,7 L0,7 Z" fill="#a8a8f4"/><path d="M0,0.5 L6.5,7" stroke="#333" stroke-width="0.8"/></svg>
<svg style="position:absolute;left:739px;top:664px" width="21" height="21"><path d="M3.5,0.8 L15.3,0.8 L16.2,1.8 L16.2,10 L3.5,10 Z" fill="#c8f4f4" stroke="#000" stroke-width="1.2"/><path d="M5.5,3 L6.5,3 M5.5,3 L5.5,4.5 M7.5,4 L7.5,4.5 M9,3 L9,4.5 L10.5,4.5 M12,4.5 L12.5,4.5 M5.5,6.5 L5.5,8 M7,6.5 L8,6.5 M8,6.5 L8,8 M9.5,7.5 L9.5,8 M11,6.5 L12.5,6.5 L12.5,8" stroke="#222" stroke-width="0.9"/><path d="M1,11.5 Q1,9.8 2.5,9.8 L17.5,9.8 Q19,9.8 19,11.5 L19,18.5 Q19,19.5 18,19.5 L2,19.5 Q1,19.5 1,18.5 Z" fill="#a9a9a9" stroke="#000" stroke-width="1.2"/><rect x="1.6" y="15" width="16.8" height="4" fill="#6e6e6e"/><path d="M1,14.6 L19,14.6" stroke="#000" stroke-width="0.9"/><path d="M14,12.3 L16.5,12.3" stroke="#000" stroke-width="1"/></svg>

<div style="left:820px;top:689px;width:96px;height:1px;background:#fff"></div>
<div style="left:915px;top:659px;width:1px;height:31px;background:#fff"></div>
<div style="left:819px;top:658px;width:96px;height:31px;box-sizing:border-box;background:#b9cfe6;border:1px solid #8ea6c0;"></div>
<svg style="position:absolute;left:826px;top:663px" width="20" height="22"><path d="M2.5,1 L13,1 L17,5.5 L17,19.5 L2.5,19.5 Z" fill="#d8d8ff"/><path d="M2.5,19.5 L2.5,0.8 L13,0.8 L17,5.5 L17,19.5 Z" fill="none" stroke="#000" stroke-width="1.1"/><path d="M3.2,20.5 L17.9,20.5 L17.9,6" fill="none" stroke="#000" stroke-width="0.9"/><path d="M13,1 L13,5.5 L17,5.5" fill="#fff"/><path d="M13,0.8 L17,5.5" stroke="#000" stroke-width="1.1" stroke-dasharray="1.1,0.8"/><path d="M1.6,10.5 L4.2,13.6 L8.8,5.2" fill="none" stroke="#10b840" stroke-width="2"/></svg>

<div style="left:922px;top:689px;width:94px;height:1px;background:#fff"></div>
<div style="left:1015px;top:659px;width:1px;height:31px;background:#fff"></div>
<div style="left:921px;top:658px;width:94px;height:31px;box-sizing:border-box;background:#eeeeee;border:1px solid #a3a3a3;box-shadow:inset 1px 1px 0 #fff;"></div>
<svg style="position:absolute;left:931px;top:663px" width="24" height="22"><path d="M6.5,1 L17,1 L21,5.5 L21,19.5 L6.5,19.5 Z" fill="#d8d8ff"/><path d="M6.5,19.5 L6.5,0.8 L17,0.8 L21,5.5 L21,19.5 Z" fill="none" stroke="#000" stroke-width="1.1"/><path d="M7.2,20.5 L21.9,20.5 L21.9,6" fill="none" stroke="#000" stroke-width="0.9"/><path d="M17,1 L17,5.5 L21,5.5" fill="#fff"/><path d="M17,0.8 L21,5.5" stroke="#000" stroke-width="1.1" stroke-dasharray="1.1,0.8"/><path d="M1,9.3 L8.8,9.3 L8.8,6.8 L14.8,11.3 L8.8,15.8 L8.8,13.3 L1,13.3 Z" fill="#10b840" stroke="#000" stroke-width="1.1" stroke-linejoin="round"/></svg>
<div style="left:0;top:0;width:1023px;height:696px;will-change:transform"><span class="t" style="left:38.18px;top:8px;letter-spacing:0.350px;color:#1a1a1a;font-weight:bold;transform:scaleX(1.1190);transform-origin:0 0;">Lieferantenbestellung #</span>
<span class="t" style="left:11.20px;top:29px;letter-spacing:0.614px;color:#333;">Aktionen</span>
<span class="t" style="left:18.30px;top:51px;letter-spacing:0.533px;color:#333;">Adresse</span>
<span class="t" style="left:89.60px;top:53px;letter-spacing:0.650px;color:#333;">Bestellpositionen</span>
<span class="t" style="left:218.50px;top:53px;letter-spacing:0.500px;color:#333;">Verlauf</span>
<span class="t" style="left:283.60px;top:53px;letter-spacing:0.631px;color:#333;">Dokumente und Verknüpfungen</span>
<span class="t" style="left:504.00px;top:53px;letter-spacing:0.400px;color:#333;">Belege</span>
<span class="t" style="left:14.90px;top:80px;letter-spacing:0.350px;color:#222;font-weight:bold;transform:scaleX(1.1382);transform-origin:0 0;">Grunddaten</span>
<span class="t" style="left:13.57px;top:607px;letter-spacing:0.350px;color:#222;font-weight:bold;transform:scaleX(1.1316);transform-origin:0 0;">Hinweise</span>
<span class="t" style="left:37.30px;top:110px;letter-spacing:0.600px;color:#333;">Bestellung:</span>
<span class="t" style="left:399.00px;top:110px;letter-spacing:0.050px;color:#333;">vom</span>
<span class="t" style="left:432.80px;top:109px;letter-spacing:0.800px;color:#333;">31.08.2015</span>
<span class="t" style="left:12.30px;top:138px;letter-spacing:0.462px;color:#333;">Fremdreferenz:</span>
<span class="t" style="left:399.00px;top:138px;letter-spacing:0.050px;color:#333;">vom</span>
<span class="t" style="left:434.00px;top:137px;letter-spacing:-0.740px;color:#000;">TT.MM.</span>
<span class="t" style="left:135.00px;top:166px;letter-spacing:0.748px;color:#333;">Auftragsbestätigung erhalten</span>
<span class="t" style="left:47.30px;top:204px;letter-spacing:0.667px;color:#333;">Lieferant:</span>
<span class="t" style="left:115.60px;top:203px;letter-spacing:0.338px;color:#333;">Foto Lehmann GmbH</span>
<span class="t" style="left:66.30px;top:232px;letter-spacing:0.750px;color:#333;">Name:</span>
<span class="t" style="left:115.50px;top:230px;letter-spacing:0.500px;color:#333;">Foto Lehmann GmbH</span>
<span class="t" style="left:62.30px;top:294px;letter-spacing:0.333px;color:#333;">Straße:</span>
<span class="t" style="left:115.50px;top:292px;letter-spacing:0.455px;color:#333;">Königsweg 23</span>
<span class="t" style="left:56.30px;top:356px;letter-spacing:0.286px;color:#333;">PLZ/Ort:</span>
<span class="t" style="left:115.50px;top:355px;letter-spacing:0.750px;color:#333;">24568</span>
<span class="t" style="left:176.50px;top:355px;letter-spacing:0.600px;color:#333;">Winsen</span>
<span class="t" style="left:59.30px;top:384px;letter-spacing:0.143px;color:#333;">Telefon:</span>
<span class="t" style="left:116.50px;top:383px;letter-spacing:0.615px;color:#333;">0911 123456789</span>
<span class="t" style="left:296.50px;top:384px;letter-spacing:0.000px;color:#333;">Fax:</span>
<span class="t" style="left:68.30px;top:412px;letter-spacing:0.600px;color:#333;">Email:</span>
<span class="t" style="left:52.30px;top:440px;letter-spacing:0.429px;color:#333;">Sprache:</span>
<span class="t" style="left:115.50px;top:439px;letter-spacing:-1.000px;color:#333;">DE</span>
<span class="t" style="left:154.50px;top:439px;letter-spacing:0.600px;color:#333;">German</span>
<span class="t" style="left:296.50px;top:440px;letter-spacing:0.125px;color:#333;">Land:</span>
<span class="t" style="left:339.50px;top:439px;letter-spacing:-1.000px;color:#333;">DE</span>
<span class="t" style="left:378.50px;top:439px;letter-spacing:0.667px;color:#333;">Germany</span>
<span class="t" style="left:598.30px;top:110px;letter-spacing:0.600px;color:#333;">Bearbeiter:</span>
<span class="t" style="left:677.50px;top:109px;letter-spacing:0.000px;color:#333;">ADM</span>
<span class="t" style="left:715.50px;top:109px;letter-spacing:0.700px;color:#333;">Obermeister</span>
<span class="t" style="left:613.30px;top:138px;letter-spacing:0.375px;color:#333;">Erfasser:</span>
<span class="t" style="left:677.50px;top:137px;letter-spacing:0.000px;color:#333;">ADM</span>
<span class="t" style="left:715.50px;top:137px;letter-spacing:0.700px;color:#333;">Obermeister</span>
<span class="t" style="left:597.30px;top:166px;letter-spacing:0.500px;color:#333;">Erfasst am:</span>
<span class="t" style="left:676.50px;top:165px;letter-spacing:0.389px;color:#333;">Mo 31.08.2015 KW:36</span>
<span class="t" style="left:588.30px;top:194px;letter-spacing:0.667px;color:#333;">Liefertermin:</span>
<span class="t" style="left:678.00px;top:193px;letter-spacing:-0.740px;color:#000;">TT.MM.</span>
<span class="t" style="left:624.30px;top:222px;letter-spacing:0.667px;color:#333;">Status:</span>
<span class="t" style="left:698.60px;top:222px;letter-spacing:0.586px;color:#333;">Bestellt</span>
<span class="t" style="left:774.80px;top:222px;letter-spacing:0.433px;color:#333;">Teilgeliefert</span>
<span class="t" style="left:876.50px;top:222px;letter-spacing:0.740px;color:#333;">Unberechnet</span>
<span class="t" style="left:560.30px;top:250px;letter-spacing:0.571px;color:#333;">Änderungsgrund:</span>
<span class="t" style="left:608.30px;top:312px;letter-spacing:0.571px;color:#333;">Währung:</span>
<span class="t" style="left:676.50px;top:311px;letter-spacing:-0.500px;color:#333;">EUR</span>
<span class="t" style="left:715.50px;top:311px;letter-spacing:0.333px;color:#333;">Euro</span>
<span class="t" style="left:588.30px;top:340px;letter-spacing:0.727px;color:#333;">Zahlungsart:</span>
<span class="t" style="left:676.50px;top:339px;letter-spacing:1.000px;color:#333;">as</span>
<span class="t" style="left:715.50px;top:339px;letter-spacing:0.615px;color:#333;">absolut sofort</span>
<span class="t" style="left:609.30px;top:368px;letter-spacing:0.400px;color:#333;">Fälligkeit:</span>
<span class="t" style="left:676.50px;top:367px;letter-spacing:0.583px;color:#333;">Mo 31.08.2015</span>
<span class="t" style="left:811.60px;top:368px;letter-spacing:0.633px;color:#333;">Skonto:</span>
<span class="t" style="left:870.00px;top:367px;letter-spacing:-0.740px;color:#000;">TT.MM.</span>
<span class="t" style="left:596.30px;top:396px;letter-spacing:0.500px;color:#333;">Versandart:</span>
<span class="t" style="left:577.30px;top:434px;letter-spacing:0.500px;color:#333;">Rechnungsart:</span>
<span class="t" style="left:678.00px;top:434px;letter-spacing:0.750px;color:#333;">Nettorechnung</span>
<span class="t" style="left:547.30px;top:462px;letter-spacing:0.684px;color:#333;">Bestellwert (netto):</span>
<span class="t" style="left:680.40px;top:461px;letter-spacing:-0.500px;color:#333;">EUR</span>
<span class="t" style="left:759.70px;top:461px;letter-spacing:0.714px;color:#333;">1.380,00</span>
<span class="t" style="left:604.30px;top:490px;letter-spacing:0.444px;color:#333;">Vorsteuer:</span>
<span class="t" style="left:680.40px;top:489px;letter-spacing:-0.500px;color:#333;">EUR</span>
<span class="t" style="left:771.70px;top:489px;letter-spacing:0.800px;color:#333;">262,20</span>
<span class="t" style="left:542.30px;top:518px;letter-spacing:0.650px;color:#333;">Bestellwert (brutto):</span>
<span class="t" style="left:680.40px;top:517px;letter-spacing:-0.500px;color:#333;">EUR</span>
<span class="t" style="left:759.70px;top:517px;letter-spacing:0.714px;color:#333;">1.642,20</span>
<span class="t" style="left:599.30px;top:546px;letter-spacing:0.400px;color:#333;">Preisdruck:</span>
<span class="t" style="left:678.00px;top:546px;letter-spacing:0.667px;color:#333;">Nein</span>
<span class="t" style="left:564.30px;top:574px;letter-spacing:0.600px;color:#333;">Offene Aufträge:</span>
<span class="t" style="left:678.00px;top:574px;letter-spacing:0.667px;color:#333;">nicht drucken</span>
<span class="t" style="left:109.60px;top:667px;letter-spacing:0.345px;color:#333;">Wareneing...</span>
<span class="t" style="left:235.40px;top:667px;letter-spacing:0.567px;color:#333;">Eingangsrechn...</span>
<span class="t" style="left:391.20px;top:667px;letter-spacing:-0.067px;color:#333;">E...</span>
<span class="t" style="left:462.90px;top:667px;letter-spacing:0.308px;color:#333;">Wiedervorl...</span>
<span class="t" style="left:588.00px;top:667px;letter-spacing:0.395px;color:#333;">Wiedervorlage-Hist...</span>
<span class="t" style="left:764.60px;top:667px;letter-spacing:0.533px;color:#333;">Druc...</span>
<span class="t" style="left:853.90px;top:667px;letter-spacing:0.288px;color:#333;">Speich...</span>
<span class="t" style="left:957.40px;top:667px;letter-spacing:0.413px;color:#333;">Schlie...</span></div></body></html>
